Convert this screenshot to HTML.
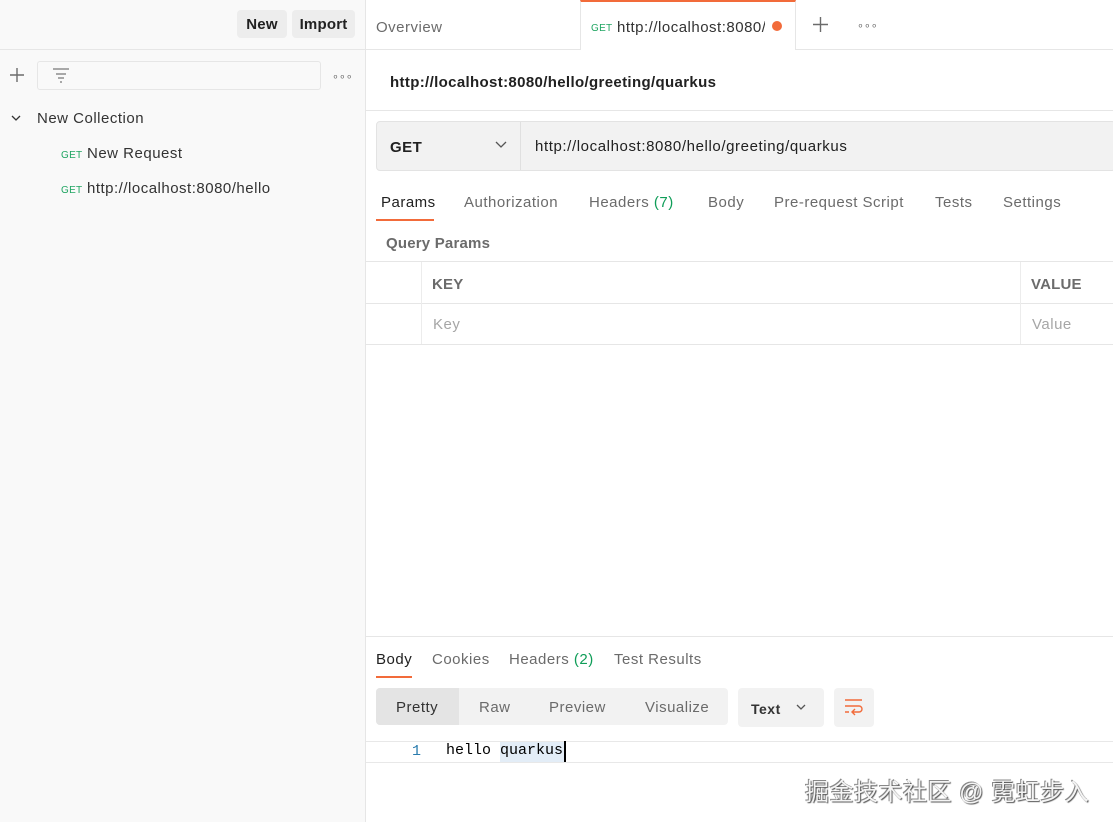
<!DOCTYPE html><html><head><meta charset="utf-8"><style>
*{margin:0;padding:0;box-sizing:border-box}
body{width:1113px;height:822px;overflow:hidden;font-family:"Liberation Sans",sans-serif;background:#fff;position:relative;color:#212121;letter-spacing:0.5px}
.a{position:absolute;white-space:nowrap}
.t{margin-top:2px}
.side{left:0;top:0;width:366px;height:822px;background:#f9f9f9;border-right:1px solid #e6e6e6}
.btn{background:#ededed;border-radius:4px;font-size:15px;font-weight:bold;color:#212121;text-align:center;line-height:28px;height:28px;top:10px;letter-spacing:0.2px}
.g{font-size:10px;color:#20a562;letter-spacing:0.3px}
.tab{font-size:15px;color:#6b6b6b;top:192px}
.gray{color:#6b6b6b}
</style></head><body>
<div class="a side"></div>
<div class="a" style="left:0;top:49px;width:366px;height:1px;background:#e6e6e6"></div>
<div class="a btn" style="left:237px;width:50px;line-height:30px">New</div>
<div class="a btn" style="left:292px;width:63px;line-height:30px">Import</div>
<svg class="a" style="left:9px;top:67px" width="16" height="16"><path d="M8 1v14M1 8h14" stroke="#6b6b6b" stroke-width="1.4"/></svg>
<div class="a" style="left:37px;top:61px;width:284px;height:29px;border:1px solid #e6e6e6;border-radius:3px;background:#f9f9f9"></div>
<svg class="a" style="left:51px;top:66px" width="20" height="18"><path d="M2 3h16M5 8h10M7 12h6M9 16h2" stroke="#777" stroke-width="1.3"/></svg>
<div class="a gray t" style="left:332px;top:68px;font-size:11px;letter-spacing:0px">∘∘∘</div>
<svg class="a" style="left:10px;top:113px" width="12" height="10"><path d="M2 3l4 4 4-4" stroke="#333" fill="none" stroke-width="1.3"/></svg>
<div class="a t" style="left:37px;top:108px;font-size:15px;color:#333">New Collection</div>
<div class="a g t" style="left:61px;top:148px">GET</div>
<div class="a t" style="left:87px;top:143px;font-size:15px;color:#333">New Request</div>
<div class="a g t" style="left:61px;top:183px">GET</div>
<div class="a t" style="left:87px;top:178px;font-size:15px;color:#333">http://localhost:8080/hello</div>

<div class="a" style="left:366px;top:49px;width:747px;height:1px;background:#e6e6e6"></div>
<div class="a gray t" style="left:376px;top:17px;font-size:15px">Overview</div>
<div class="a" style="left:580px;top:0;width:216px;height:50px;background:#fff;border-left:1px solid #e6e6e6;border-right:1px solid #e6e6e6;border-top:2px solid #f26b3a"></div>
<div class="a g t" style="left:591px;top:21px">GET</div>
<div class="a t" style="left:617px;top:17px;font-size:15px;color:#333;width:148px;overflow:hidden">http://localhost:8080/hello</div>
<div class="a" style="left:772px;top:21px;width:10px;height:10px;border-radius:50%;background:#f26b3a"></div>
<svg class="a" style="left:812px;top:16px" width="17" height="17"><path d="M8.5 1v15M1 8.5h15" stroke="#6b6b6b" stroke-width="1.4"/></svg>
<div class="a gray t" style="left:857px;top:17px;font-size:11px;letter-spacing:0">∘∘∘</div>

<div class="a t" style="left:390px;top:72px;font-size:15px;font-weight:bold;color:#212121;letter-spacing:0.35px">http://localhost:8080/hello/greeting/quarkus</div>
<div class="a" style="left:366px;top:110px;width:747px;height:1px;background:#e6e6e6"></div>
<div class="a" style="left:376px;top:121px;width:740px;height:50px;background:#f2f2f2;border:1px solid #e3e3e3;border-radius:4px"></div>
<div class="a" style="left:520px;top:122px;width:1px;height:48px;background:#e0e0e0"></div>
<div class="a t" style="left:390px;top:137px;font-size:15px;font-weight:bold">GET</div>
<svg class="a" style="left:494px;top:140px" width="14" height="10"><path d="M2 2l5 5 5-5" stroke="#555" fill="none" stroke-width="1.3"/></svg>
<div class="a t" style="left:535px;top:136px;font-size:15px;color:#212121;letter-spacing:0.6px">http://localhost:8080/hello/greeting/quarkus</div>

<div class="a tab t" style="left:381px;color:#212121">Params</div>
<div class="a tab t" style="left:464px">Authorization</div>
<div class="a tab t" style="left:589px">Headers <span style="color:#0f9d58">(7)</span></div>
<div class="a tab t" style="left:708px">Body</div>
<div class="a tab t" style="left:774px">Pre-request Script</div>
<div class="a tab t" style="left:935px">Tests</div>
<div class="a tab t" style="left:1003px">Settings</div>
<div class="a" style="left:376px;top:219px;width:58px;height:2px;background:#f26b3a"></div>
<div class="a gray t" style="left:386px;top:233px;font-size:15px;font-weight:bold;letter-spacing:0.2px">Query Params</div>
<div class="a" style="left:366px;top:261px;width:747px;height:1px;background:#e6e6e6"></div>
<div class="a" style="left:366px;top:303px;width:747px;height:1px;background:#e6e6e6"></div>
<div class="a" style="left:366px;top:344px;width:747px;height:1px;background:#e6e6e6"></div>
<div class="a" style="left:421px;top:262px;width:1px;height:82px;background:#ececec"></div>
<div class="a" style="left:1020px;top:262px;width:1px;height:82px;background:#ececec"></div>
<div class="a gray t" style="left:432px;top:274px;font-size:15px;font-weight:bold;letter-spacing:0.2px">KEY</div>
<div class="a gray t" style="left:1031px;top:274px;font-size:15px;font-weight:bold;letter-spacing:0.2px">VALUE</div>
<div class="a t" style="left:433px;top:314px;font-size:15px;color:#a6a6a6">Key</div>
<div class="a t" style="left:1032px;top:314px;font-size:15px;color:#a6a6a6">Value</div>

<div class="a" style="left:366px;top:636px;width:747px;height:1px;background:#e6e6e6"></div>
<div class="a t" style="left:376px;top:649px;font-size:15px;color:#212121">Body</div>
<div class="a gray t" style="left:432px;top:649px;font-size:15px">Cookies</div>
<div class="a gray t" style="left:509px;top:649px;font-size:15px">Headers <span style="color:#0f9d58">(2)</span></div>
<div class="a gray t" style="left:614px;top:649px;font-size:15px">Test Results</div>
<div class="a" style="left:376px;top:676px;width:36px;height:2px;background:#f26b3a"></div>
<div class="a" style="left:376px;top:688px;width:352px;height:37px;background:#f2f2f2;border-radius:4px"></div>
<div class="a" style="left:376px;top:688px;width:83px;height:37px;background:#e4e4e4;border-radius:4px 0 0 4px"></div>
<div class="a t" style="left:396px;top:697px;font-size:15px;color:#333">Pretty</div>
<div class="a gray t" style="left:479px;top:697px;font-size:15px">Raw</div>
<div class="a gray t" style="left:549px;top:697px;font-size:15px">Preview</div>
<div class="a gray t" style="left:645px;top:697px;font-size:15px">Visualize</div>
<div class="a" style="left:738px;top:688px;width:86px;height:39px;background:#f2f2f2;border-radius:4px"></div>
<div class="a t" style="left:751px;top:699px;font-size:14px;font-weight:bold;color:#333">Text</div>
<svg class="a" style="left:795px;top:703px" width="12" height="9"><path d="M2 2l4 4 4-4" stroke="#555" fill="none" stroke-width="1.3"/></svg>
<div class="a" style="left:834px;top:688px;width:40px;height:39px;background:#f2f2f2;border-radius:4px"></div>
<svg class="a" style="left:844px;top:698px" width="20" height="18"><path d="M1 2h17M1 8h14a3 3 0 0 1 0 6h-6M11 11l-3 3 3 3M1 14h4" stroke="#f26b3a" fill="none" stroke-width="1.4"/></svg>
<div class="a" style="left:366px;top:741px;width:747px;height:22px;border-top:1px solid #e8e8e8;border-bottom:1px solid #e8e8e8"></div>
<div class="a" style="left:412px;top:743px;font-size:15px;color:#2a7cae;font-family:'Liberation Mono',monospace;letter-spacing:0">1</div>
<div class="a" style="left:500px;top:742px;width:64px;height:20px;background:#e3edf7"></div>
<div class="a" style="left:446px;top:742px;font-size:15px;color:#000;font-family:'Liberation Mono',monospace;letter-spacing:0">hello quarkus</div>
<div class="a" style="left:564px;top:741px;width:2px;height:21px;background:#000"></div>
<div class="a" style="left:805px;top:772px;font-size:24px;letter-spacing:0.5px;color:#f4f4f4;font-family:'Liberation Sans','Noto Sans CJK SC',sans-serif;text-shadow:1px 1px 1px #555,-1px -1px 0 #888">掘金技术社区 @ 霓虹步入</div>
</body></html>
